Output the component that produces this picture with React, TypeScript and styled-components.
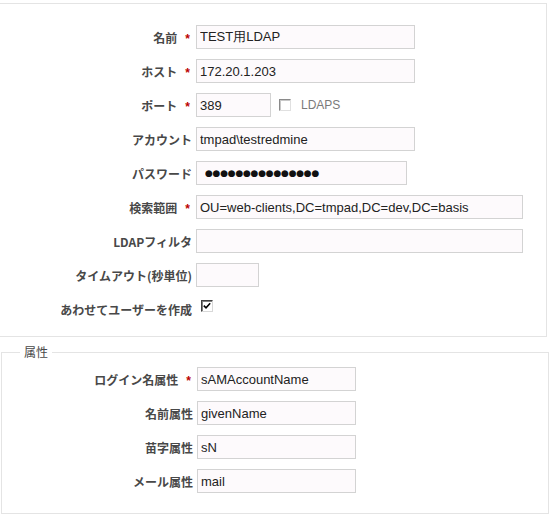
import React from 'react';
import styled, { createGlobalStyle } from 'styled-components';

const GlobalStyle = createGlobalStyle`
  html, body {
    margin: 0;
    padding: 0;
    background: #ffffff;
    font-family: "Liberation Sans", "Noto Sans CJK JP", sans-serif;
    font-size: 12px;
    color: #484848;
  }
`;

const Page = styled.div`
  width: 553px;
  padding-top: 3px;
  overflow: hidden;
`;

const Box = styled.div`
  box-sizing: border-box;
  width: 549px;
  margin-left: -2px;
  padding: 16px 0 10px 0;
  border: 1px solid #e4e4e4;
  background: #ffffff;
`;

const Fieldset = styled.fieldset`
  box-sizing: border-box;
  width: 548px;
  margin: 7px 0 0 1px;
  padding: 2px 0 15px 18px;
  border: 1px solid #e4e4e4;
  min-inline-size: 0;
`;

const Legend = styled.legend`
  padding: 0 4px;
  font-family: "Noto Sans CJK JP", sans-serif;
  font-size: 12px;
  line-height: 16px;
  color: #484848;
`;

const Row = styled.div<{ $labelWidth: number }>`
  display: grid;
  grid-template-columns: ${({ $labelWidth }) => $labelWidth}px 1fr;
  column-gap: 4px;
  align-items: center;
  height: 34px;
`;

const Label = styled.label`
  text-align: right;
  font-family: "Noto Sans CJK JP", sans-serif;
  font-weight: bold;
  font-size: 12px;
  color: #484848;
  white-space: nowrap;
`;

const Required = styled.span`
  color: #bb0000;
  font-family: "Liberation Sans", sans-serif;
  margin-left: 8px;
  margin-right: 2px;
`;

const Field = styled.div`
  display: flex;
  align-items: center;
`;

const TextInput = styled.input<{ $w: number }>`
  box-sizing: border-box;
  width: ${({ $w }) => $w}px;
  height: 24px;
  margin: 0;
  padding: 0 3px;
  border: 1px solid #d3d3d3;
  background: #fdfafc;
  font-family: "Liberation Sans", sans-serif;
  font-size: 13px;
  color: #222222;
  outline: none;
`;

const DotsInput = styled(TextInput)`
  font-family: "DejaVu Sans", sans-serif;
  font-size: 9px;
  letter-spacing: -0.25px;
  padding-left: 8px;
  color: #111111;
`;

const Check = styled.span<{ $checked?: boolean }>`
  box-sizing: border-box;
  display: inline-flex;
  align-items: center;
  justify-content: center;
  width: 12px;
  height: 12px;
  border: 1px solid;
  border-color: ${({ $checked }) => ($checked ? '#404040 #d8d8d8 #d8d8d8 #404040' : '#8a8a8a #e0e0e0 #e0e0e0 #8a8a8a')};
  box-shadow: inset 1px 1px 0 ${({ $checked }) => ($checked ? '#808080' : '#c8c8c8')};
  background: #ffffff;
`;

const CheckWrap = styled.span<{ $offset: number }>`
  display: inline-flex;
  align-items: center;
  margin-left: ${({ $offset }) => $offset}px;
  margin-top: ${({ $offset }) => ($offset > 5 ? 0 : -6)}px;
`;

const InlineLabel = styled.span`
  margin-left: 10px;
  font-family: "Liberation Sans", sans-serif;
  font-size: 12px;
  color: #7a7a7a;
`;

interface FieldDef {
  label: string;
  required?: boolean;
  value?: string;
  width: number;
}

const mainFields: FieldDef[] = [
  { label: '名前', required: true, value: 'TEST用LDAP', width: 219 },
  { label: 'ホスト', required: true, value: '172.20.1.203', width: 219 },
];

const attrFields: FieldDef[] = [
  { label: 'ログイン名属性', required: true, value: 'sAMAccountName', width: 159 },
  { label: '名前属性', value: 'givenName', width: 159 },
  { label: '苗字属性', value: 'sN', width: 159 },
  { label: 'メール属性', value: 'mail', width: 159 },
];

const LabelText: React.FC<{ text: string; required?: boolean }> = ({ text, required }) => (
  <Label>
    {text}
    {required && <Required>*</Required>}
  </Label>
);

const InputRow: React.FC<{ field: FieldDef; labelWidth: number }> = ({ field, labelWidth }) => (
  <Row $labelWidth={labelWidth}>
    <LabelText text={field.label} required={field.required} />
    <Field>
      <TextInput $w={field.width} defaultValue={field.value ?? ''} readOnly />
    </Field>
  </Row>
);

const CheckMark = () => (
  <svg width="8" height="8" viewBox="0 0 8 8">
    <path d="M0.8 3.6 L3 5.8 L7.2 1.2" fill="none" stroke="#000" strokeWidth="1.6" />
  </svg>
);

export default function App() {
  return (
    <Page>
      <GlobalStyle />
      <Box>
        {mainFields.map((f) => (
          <InputRow key={f.label} field={f} labelWidth={193} />
        ))}
        <Row $labelWidth={193}>
          <LabelText text="ポート" required />
          <Field>
            <TextInput $w={75} defaultValue="389" readOnly />
            <CheckWrap $offset={8}>
              <Check />
              <InlineLabel>LDAPS</InlineLabel>
            </CheckWrap>
          </Field>
        </Row>
        <InputRow field={{ label: 'アカウント', value: 'tmpad\\testredmine', width: 219 }} labelWidth={193} />
        <Row $labelWidth={193}>
          <LabelText text="パスワード" />
          <Field>
            <DotsInput $w={211} defaultValue={'●'.repeat(15)} readOnly />
          </Field>
        </Row>
        <InputRow
          field={{ label: '検索範囲', required: true, value: 'OU=web-clients,DC=tmpad,DC=dev,DC=basis', width: 327 }}
          labelWidth={193}
        />
        <InputRow field={{ label: 'LDAPフィルタ', width: 327 }} labelWidth={193} />
        <InputRow field={{ label: 'タイムアウト(秒単位)', width: 63 }} labelWidth={193} />
        <Row $labelWidth={193}>
          <LabelText text="あわせてユーザーを作成" />
          <Field>
            <CheckWrap $offset={5}>
              <Check $checked>
                <CheckMark />
              </Check>
            </CheckWrap>
          </Field>
        </Row>
      </Box>
      <Fieldset>
        <Legend>属性</Legend>
        {attrFields.map((f) => (
          <InputRow key={f.label} field={f} labelWidth={173} />
        ))}
      </Fieldset>
    </Page>
  );
}
